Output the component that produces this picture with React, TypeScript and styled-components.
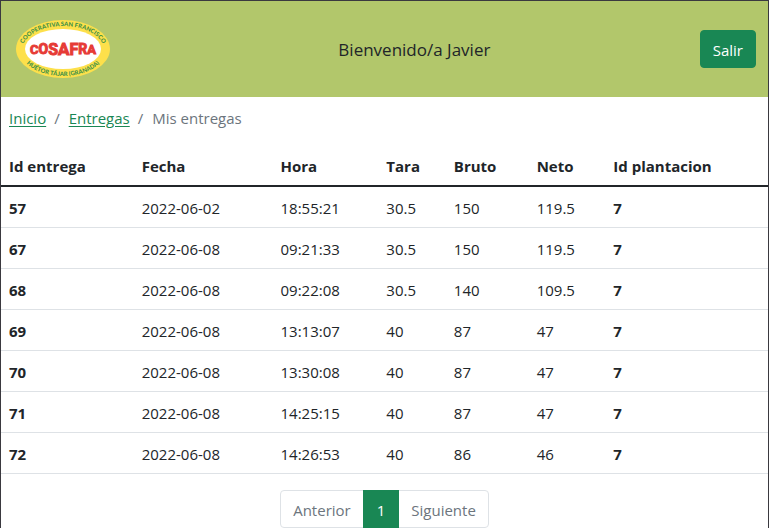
import React from "react";
import styled, { createGlobalStyle } from "styled-components";

const GlobalStyle = createGlobalStyle`
  *, *::before, *::after { box-sizing: border-box; }
  html { background: #fff; }
  body {
    margin: 0;
    overflow: hidden;
    color: #212529;
    background: #fff;
    font-family: "Segoe UI", "Open Sans", "Noto Sans", sans-serif;
    font-size: 15px;
    line-height: 24px;
  }
`;

const Page = styled.div`
  min-height: 100vh;
  border: 1px solid #3a393f;
  border-bottom: 0;
`;

const Header = styled.header`
  display: flex;
  align-items: center;
  justify-content: space-between;
  height: 96px;
  padding: 0 12px 0 14px;
  background: #b2c76b;
`;

const LogoDrawing = styled.svg`
  display: block;
  width: 96px;
  height: 60px;
`;

const Welcome = styled.h1`
  margin: 0;
  padding: 2px 0 0 18px;
  font-size: 17px;
  font-weight: 400;
`;

const LogoutButton = styled.button`
  height: 38px;
  padding: 2px 12px 0;
  border: 1px solid #198754;
  border-radius: 4px;
  background: #198754;
  color: #fff;
  font: inherit;
  cursor: pointer;
`;

const Breadcrumb = styled.ol`
  display: flex;
  gap: 8px;
  margin: 0;
  padding: 9px 8px 17px;
  list-style: none;
`;

const Crumb = styled.li`
  display: flex;
  gap: 9px;
  color: #6c757d;

  & + &::before {
    content: "/";
  }
`;

const CrumbLink = styled.a`
  color: #198754;
  text-decoration: underline;
  text-underline-offset: 2px;
`;

const Table = styled.table`
  width: 100%;
  table-layout: fixed;
  border-collapse: separate;
  border-spacing: 0;
`;

const Column = styled.col<{ $share: number }>`
  width: ${({ $share }) => $share}%;
`;

const HeadCell = styled.th`
  height: 40px;
  padding: 0 8px;
  border-bottom: 2px solid #212529;
  text-align: left;
  font-weight: 700;
  white-space: nowrap;
`;

const Cell = styled.td<{ $strong?: boolean }>`
  height: 41px;
  padding: 2px 8px 0;
  border-bottom: 1px solid #dee2e6;
  text-align: left;
  font-weight: ${({ $strong }) => ($strong ? 700 : 400)};
`;

const Pagination = styled.ul`
  display: flex;
  justify-content: center;
  margin: 16px 0 0;
  padding: 0;
  list-style: none;
`;

const PageItem = styled.li`
  & + & { margin-left: -1px; }
  &:first-child > button { border-radius: 4px 0 0 4px; }
  &:last-child > button { border-radius: 0 4px 4px 0; }
`;

const PageButton = styled.button<{ $active?: boolean }>`
  position: relative;
  z-index: ${({ $active }) => ($active ? 1 : 0)};
  height: 38px;
  padding: 2px ${({ $active }) => ($active ? 13 : 12)}px 0;
  border: 1px solid ${({ $active }) => ($active ? "#198754" : "#dee2e6")};
  background: ${({ $active }) => ($active ? "#198754" : "#fff")};
  color: ${({ $active }) => ($active ? "#fff" : "#6c757d")};
  font: inherit;
`;

const columns = [
  { label: "Id entrega", share: 17.3, strong: true },
  { label: "Fecha", share: 18.1 },
  { label: "Hora", share: 13.8 },
  { label: "Tara", share: 8.8 },
  { label: "Bruto", share: 10.8 },
  { label: "Neto", share: 10 },
  { label: "Id plantacion", share: 21.2, strong: true },
];

const deliveries = [
  ["57", "2022-06-02", "18:55:21", "30.5", "150", "119.5", "7"],
  ["67", "2022-06-08", "09:21:33", "30.5", "150", "119.5", "7"],
  ["68", "2022-06-08", "09:22:08", "30.5", "140", "109.5", "7"],
  ["69", "2022-06-08", "13:13:07", "40", "87", "47", "7"],
  ["70", "2022-06-08", "13:30:08", "40", "87", "47", "7"],
  ["71", "2022-06-08", "14:25:15", "40", "87", "47", "7"],
  ["72", "2022-06-08", "14:26:53", "40", "86", "46", "7"],
];

function Logo() {
  return (
    <LogoDrawing viewBox="0 0 96 60" role="img" aria-label="Cosafra">
      <defs>
        <path id="arc-top" d="M 7 31 A 41 24 0 0 1 89 31" />
        <path id="arc-bottom" d="M 6 32 A 42 25 0 0 0 90 32" />
      </defs>
      <ellipse cx="48" cy="30" rx="47" ry="29" fill="#fde04b" />
      <ellipse cx="48" cy="30" rx="38" ry="20" fill="#fff" />
      <g
        fill="#3f9247"
        fontFamily="Lato, sans-serif"
        fontSize="6"
        fontWeight="900"
        textAnchor="middle"
      >
        <text>
          <textPath href="#arc-top" startOffset="50%">COOPERATIVA SAN FRANCISCO</textPath>
        </text>
        <text>
          <textPath href="#arc-bottom" startOffset="50%">HUÉTOR TÁJAR (GRANADA)</textPath>
        </text>
      </g>
      <text
        x="48"
        y="35"
        fill="#e63b36"
        stroke="#e63b36"
        strokeWidth="1"
        fontFamily="Roboto, sans-serif"
        fontWeight="700"
        textAnchor="middle"
      >
        <tspan fontSize="13">C</tspan>
        <tspan fontSize="14">O</tspan>
        <tspan fontSize="16" dy="1">S</tspan>
        <tspan fontSize="17">A</tspan>
        <tspan fontSize="16">F</tspan>
        <tspan fontSize="14" dy="-1">R</tspan>
        <tspan fontSize="13">A</tspan>
      </text>
    </LogoDrawing>
  );
}

export default function App() {
  return (
    <>
      <GlobalStyle />
      <Page>
        <Header>
          <Logo />
          <Welcome>Bienvenido/a Javier</Welcome>
          <LogoutButton type="button">Salir</LogoutButton>
        </Header>
        <main>
          <nav aria-label="Ruta">
            <Breadcrumb>
              <Crumb><CrumbLink href="#inicio">Inicio</CrumbLink></Crumb>
              <Crumb><CrumbLink href="#entregas">Entregas</CrumbLink></Crumb>
              <Crumb aria-current="page">Mis entregas</Crumb>
            </Breadcrumb>
          </nav>
          <Table>
            <colgroup>
              {columns.map((column) => (
                <Column key={column.label} $share={column.share} />
              ))}
            </colgroup>
            <thead>
              <tr>
                {columns.map((column) => (
                  <HeadCell key={column.label} scope="col">{column.label}</HeadCell>
                ))}
              </tr>
            </thead>
            <tbody>
              {deliveries.map((delivery) => (
                <tr key={delivery[0]}>
                  {delivery.map((value, index) => (
                    <Cell
                      key={columns[index].label}
                      as={index === 0 ? "th" : "td"}
                      scope={index === 0 ? "row" : undefined}
                      $strong={columns[index].strong}
                    >
                      {value}
                    </Cell>
                  ))}
                </tr>
              ))}
            </tbody>
          </Table>
          <nav aria-label="Paginación">
            <Pagination>
              <PageItem><PageButton type="button" disabled>Anterior</PageButton></PageItem>
              <PageItem><PageButton type="button" $active aria-current="page">1</PageButton></PageItem>
              <PageItem><PageButton type="button" disabled>Siguiente</PageButton></PageItem>
            </Pagination>
          </nav>
        </main>
      </Page>
    </>
  );
}
